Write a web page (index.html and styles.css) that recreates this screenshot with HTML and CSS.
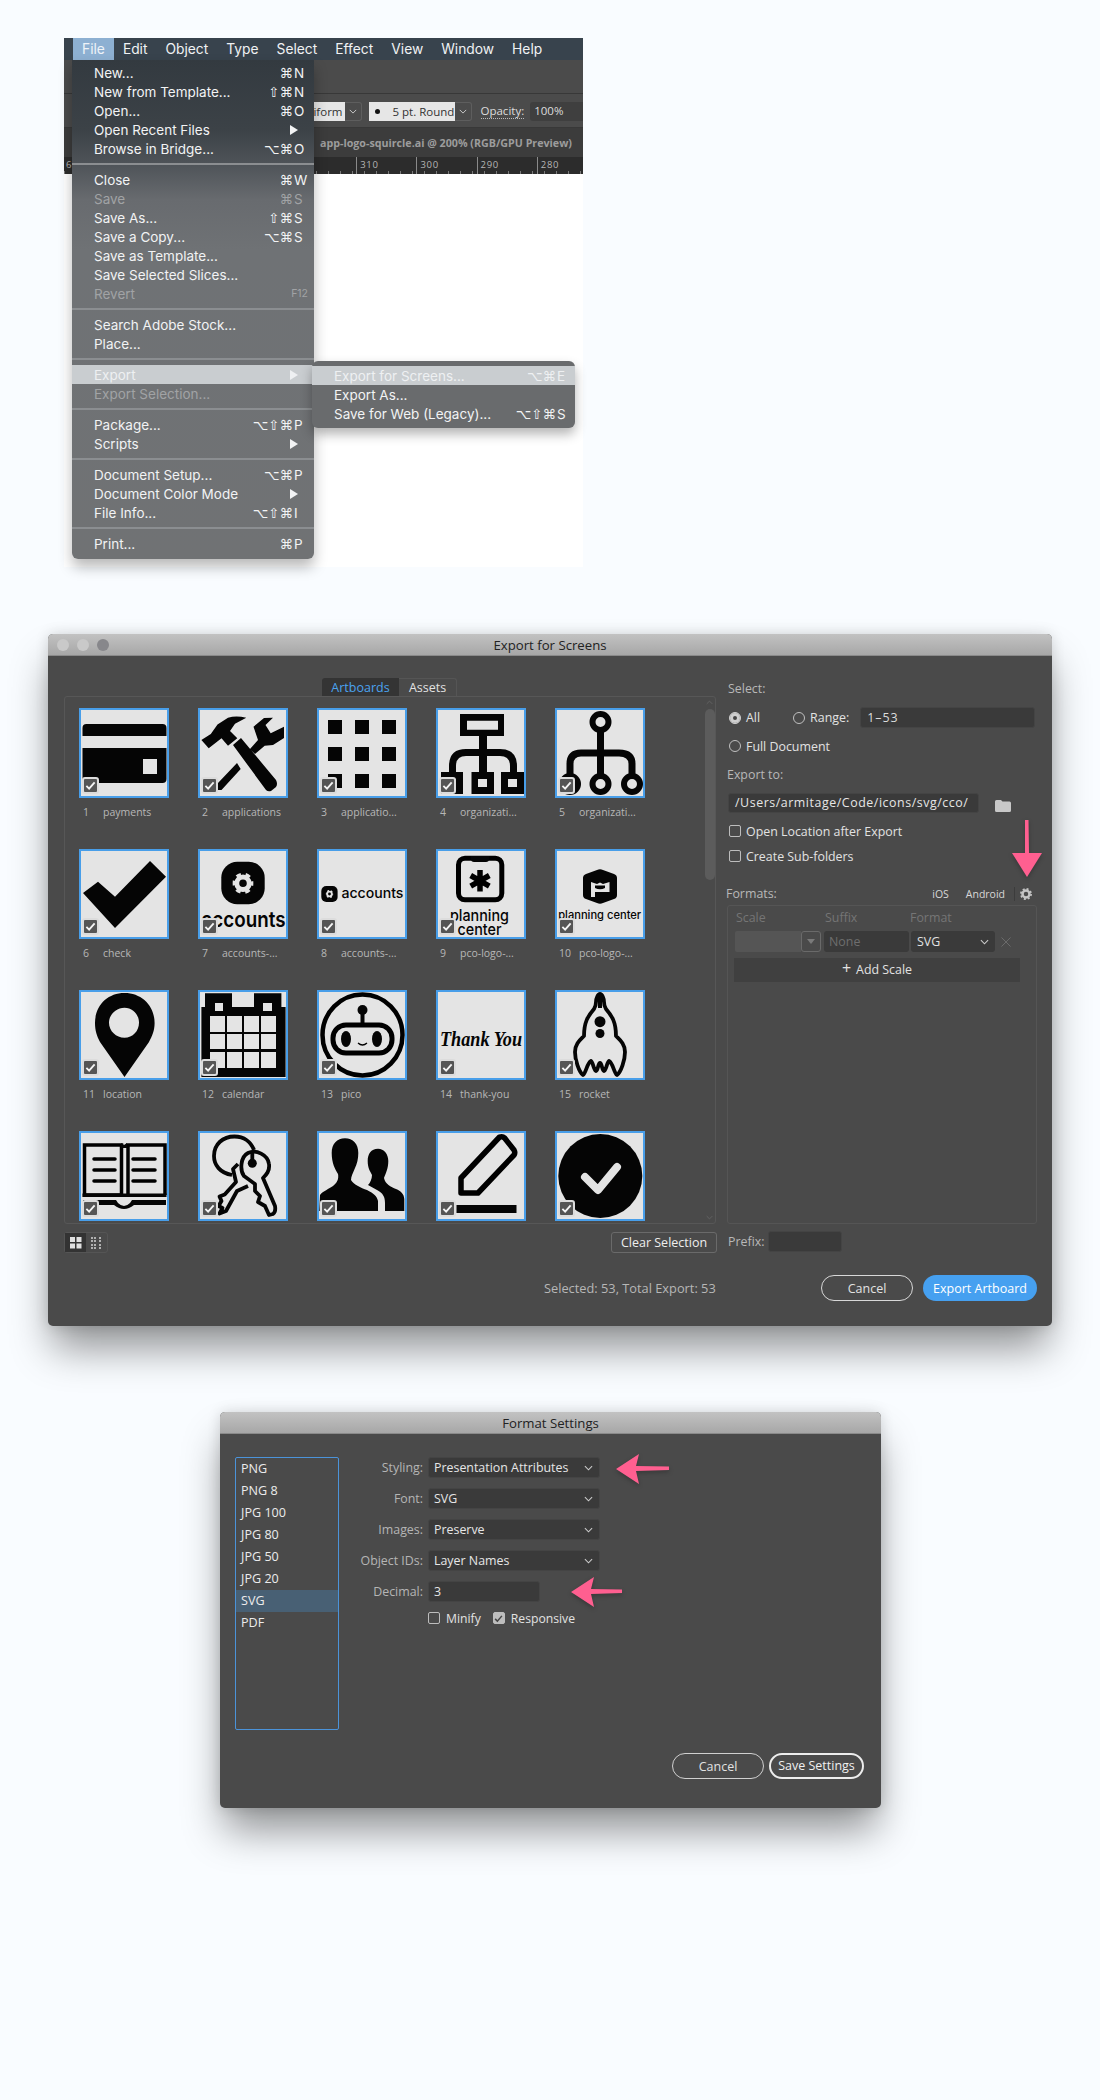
FILE: index.html
```html
<!DOCTYPE html>
<html lang="en">
<head>
<meta charset="utf-8">
<title>Export settings</title>
<link rel="stylesheet" href="styles.css">
</head>
<body>
<svg class="defs" width="0" height="0" aria-hidden="true">
  <symbol id="chev" viewBox="0 0 10 6"><path d="M1 1l4 4 4-4" fill="none" stroke="currentColor" stroke-width="1.2"/></symbol>
  <symbol id="tick" viewBox="0 0 12 12"><path d="M1.500 6.500l3 3 6-7" fill="none" stroke="currentColor" stroke-width="2"/></symbol>
  <symbol id="gear" viewBox="0 0 24 24"><circle cx="12" cy="12" r="7" fill="none" stroke="currentColor" stroke-width="5"/><circle cx="12" cy="12" r="10.2" fill="none" stroke="currentColor" stroke-width="3.4" stroke-dasharray="4 4.01"/></symbol>
  <symbol id="gear6" viewBox="0 0 24 24"><circle cx="12" cy="12" r="7" fill="none" stroke="currentColor" stroke-width="5.500"/><circle cx="12" cy="12" r="10.2" fill="none" stroke="currentColor" stroke-width="3.6" stroke-dasharray="5.34 5.34" stroke-dashoffset="2.670"/></symbol>
</svg>

<section class="app">
  <div class="menubar">
    <span class="mb-item mb-on">File</span><span class="mb-item">Edit</span><span class="mb-item">Object</span><span class="mb-item">Type</span><span class="mb-item">Select</span><span class="mb-item">Effect</span><span class="mb-item">View</span><span class="mb-item">Window</span><span class="mb-item">Help</span>
  </div>
  <div class="ctl-blank"></div>
  <div class="controls">
    <span class="ctl-light ctl-uniform">iform</span><span class="ctl-chev"><svg class="chev"><use href="#chev"/></svg></span>
    <span class="ctl-light ctl-stroke"><i class="dot"></i>5 pt. Round</span><span class="ctl-chev"><svg class="chev"><use href="#chev"/></svg></span>
    <span class="ctl-label">Opacity:</span><span class="ctl-field">100%</span>
  </div>
  <div class="doc-tab"><span class="doc-left"></span><span class="doc-name">app-logo-squircle.ai @ 200% (RGB/GPU Preview)</span></div>
  <div class="ruler"><span class="r-first">6</span><span class="r-cell"></span><span class="r-cell">310</span><span class="r-cell">300</span><span class="r-cell">290</span><span class="r-cell">280</span></div>

  <div class="menu">
    <div class="mi"><span class="ml">New...</span><span class="mods">⌘</span><span class="key">N</span></div>
    <div class="mi"><span class="ml">New from Template...</span><span class="mods">⇧⌘</span><span class="key">N</span></div>
    <div class="mi"><span class="ml">Open...</span><span class="mods">⌘</span><span class="key">O</span></div>
    <div class="mi"><span class="ml">Open Recent Files</span><i class="tri"></i></div>
    <div class="mi"><span class="ml">Browse in Bridge...</span><span class="mods">⌥⌘</span><span class="key">O</span></div>
    <div class="sep"></div>
    <div class="mi"><span class="ml">Close</span><span class="mods">⌘</span><span class="key">W</span></div>
    <div class="mi off"><span class="ml">Save</span><span class="mods">⌘</span><span class="key">S</span></div>
    <div class="mi"><span class="ml">Save As...</span><span class="mods">⇧⌘</span><span class="key">S</span></div>
    <div class="mi"><span class="ml">Save a Copy...</span><span class="mods">⌥⌘</span><span class="key">S</span></div>
    <div class="mi"><span class="ml">Save as Template...</span></div>
    <div class="mi"><span class="ml">Save Selected Slices...</span></div>
    <div class="mi off"><span class="ml">Revert</span><span class="fkey">F12</span></div>
    <div class="sep"></div>
    <div class="mi"><span class="ml">Search Adobe Stock...</span></div>
    <div class="mi"><span class="ml">Place...</span></div>
    <div class="sep"></div>
    <div class="mi hot"><span class="ml">Export</span><i class="tri"></i></div>
    <div class="mi off"><span class="ml">Export Selection...</span></div>
    <div class="sep"></div>
    <div class="mi"><span class="ml">Package...</span><span class="mods">⌥⇧⌘</span><span class="key">P</span></div>
    <div class="mi"><span class="ml">Scripts</span><i class="tri"></i></div>
    <div class="sep"></div>
    <div class="mi"><span class="ml">Document Setup...</span><span class="mods">⌥⌘</span><span class="key">P</span></div>
    <div class="mi"><span class="ml">Document Color Mode</span><i class="tri"></i></div>
    <div class="mi"><span class="ml">File Info...</span><span class="mods">⌥⇧⌘</span><span class="key">I</span></div>
    <div class="sep"></div>
    <div class="mi"><span class="ml">Print...</span><span class="mods">⌘</span><span class="key">P</span></div>
  </div>
  <div class="submenu">
    <div class="mi hot"><span class="ml">Export for Screens...</span><span class="mods">⌥⌘</span><span class="key">E</span></div>
    <div class="mi"><span class="ml">Export As...</span></div>
    <div class="mi"><span class="ml">Save for Web (Legacy)...</span><span class="mods">⌥⇧⌘</span><span class="key">S</span></div>
  </div>
</section>

<section class="dialog export">
  <header class="titlebar">
    <span class="lights"><i class="light"></i><i class="light"></i><i class="light light-on"></i></span>
    <span class="title">Export for Screens</span>
  </header>
  <div class="export-body">
    <div class="ex-left">
      <div class="tabs"><span class="tab tab-on">Artboards</span><span class="tab">Assets</span></div>
      <div class="panel">
        <div class="thumbs">
          <figure class="card">
            <div class="thumb"><svg class="art" viewBox="2 2 86 86"><path d="M3.500 28V20q0-4 4-4h76q4 0 4 4v8zM3.500 40h84v31q0 4-4 4h-76q-4 0-4-4zM64 51v15h14V51z" fill-rule="evenodd"/></svg><span class="ck"><svg><use href="#tick"/></svg></span></div>
            <figcaption class="cap"><b>1</b><span>payments</span></figcaption>
          </figure>
          <figure class="card">
            <div class="thumb"><svg class="art" viewBox="2 2 86 86"><path d="M3.400 32l7.300 8.300 12.800-10 6.500 7.400 9.300-7.400-7.300-7.300 5-7.300 11.300-6c-7-1.500-13-1.500-18.300 0l-10.500 6.700-6.700 9.600zM35 37l8-7 35 42q2 4 0 7l-5 4q-3 1-5-1zM52 41l8-9-4.500-13.300L66 10l9-.3-7.500 7.300 5.200 8.300L86 18.700V30l-11 7-8.300.7L57 46zM39 55l3.700 6-19.200 21H19l1-7z"/></svg><span class="ck"><svg><use href="#tick"/></svg></span></div>
            <figcaption class="cap"><b>2</b><span>applications</span></figcaption>
          </figure>
          <figure class="card">
            <div class="thumb"><svg class="art" viewBox="2 2 86 86"><rect x="11" y="12" width="14" height="14"/><rect x="38" y="12" width="14" height="14"/><rect x="65" y="12" width="14" height="14"/><rect x="11" y="39" width="14" height="14"/><rect x="38" y="39" width="14" height="14"/><rect x="65" y="39" width="14" height="14"/><rect x="11" y="66" width="14" height="14"/><rect x="38" y="66" width="14" height="14"/><rect x="65" y="66" width="14" height="14"/></svg><span class="ck"><svg><use href="#tick"/></svg></span></div>
            <figcaption class="cap"><b>3</b><span>applicatio...</span></figcaption>
          </figure>
          <figure class="card">
            <div class="thumb"><svg class="art" viewBox="2 2 86 86"><path d="M24 6h44v22H51v13h13q17 0 17 17v6h7v22H65V64h9v-6q0-10-10-10H51v16h7v22H35.500V64H43V48H30q-10 0-10 10v6h7v22H5V64h8v-6q0-17 17-17h13V28H24zM31 12.700v9h31v-9zM42 71v8h9v-8zM72 71v8h9v-8zM12 71v8h8v-8z" fill-rule="evenodd"/></svg><span class="ck"><svg><use href="#tick"/></svg></span></div>
            <figcaption class="cap"><b>4</b><span>organizati...</span></figcaption>
          </figure>
          <figure class="card">
            <div class="thumb"><svg class="art art-line" viewBox="2 2 86 86"><circle cx="45.500" cy="14" r="8"/><circle cx="15" cy="76" r="8"/><circle cx="45.500" cy="76" r="8"/><circle cx="77" cy="76" r="8"/><path d="M45.500 22v46M15 68V56q0-11 11-11h38q13 0 13 11v12" stroke-width="7"/></svg><span class="ck"><svg><use href="#tick"/></svg></span></div>
            <figcaption class="cap"><b>5</b><span>organizati...</span></figcaption>
          </figure>

          <figure class="card">
            <div class="thumb"><svg class="art" viewBox="2 2 86 86"><path d="M71 12l16 15.700L36 79 4 44l15-11.300 17 15z"/></svg><span class="ck"><svg><use href="#tick"/></svg></span></div>
            <figcaption class="cap"><b>6</b><span>check</span></figcaption>
          </figure>
          <figure class="card">
            <div class="thumb"><svg class="art" viewBox="2 2 86 86"><rect x="23.300" y="12.700" width="43.400" height="42.600" rx="16"/><svg x="34.300" y="23.600" width="21.400" height="21.400" color="#e4e4e4"><use href="#gear6"/></svg><text class="logo-b" x="45.500" y="78" text-anchor="middle" textLength="84" lengthAdjust="spacingAndGlyphs" font-size="22">accounts</text></svg><span class="ck"><svg><use href="#tick"/></svg></span></div>
            <figcaption class="cap"><b>7</b><span>accounts-...</span></figcaption>
          </figure>
          <figure class="card">
            <div class="thumb"><svg class="art" viewBox="2 2 86 86"><rect x="4.300" y="37" width="16.300" height="16" rx="5"/><svg x="8.500" y="41" width="8" height="8" color="#e4e4e4"><use href="#gear6"/></svg><text class="logo" x="24.400" y="49" textLength="62" lengthAdjust="spacingAndGlyphs" font-size="14">accounts</text></svg><span class="ck"><svg><use href="#tick"/></svg></span></div>
            <figcaption class="cap"><b>8</b><span>accounts-...</span></figcaption>
          </figure>
          <figure class="card">
            <div class="thumb"><svg class="art" viewBox="2 2 86 86"><rect x="22.500" y="9.200" width="43.300" height="41.600" rx="6.500" fill="none" stroke="#000" stroke-width="5"/><path d="M35 7h18v3q0 3-3 3H38q-3 0-3-3z"/><path d="M44 21v21.500M34.700 26.500l18.600 10.700M53.300 26.500L34.700 37.200" stroke="#000" stroke-width="5.500" fill="none"/><text class="logo" x="43.500" y="72" text-anchor="middle" textLength="59" lengthAdjust="spacingAndGlyphs" font-size="16">planning</text><text class="logo" x="43.500" y="85.700" text-anchor="middle" textLength="44" lengthAdjust="spacingAndGlyphs" font-size="16">center</text></svg><span class="ck"><svg><use href="#tick"/></svg></span></div>
            <figcaption class="cap"><b>9</b><span>pco-logo-...</span></figcaption>
          </figure>
          <figure class="card">
            <div class="thumb"><svg class="art" viewBox="2 2 86 86"><path d="M42 21q3-1.500 6 0l11 4q3 1 3 4v17q0 3-3 4l-11 4q-3 1.500-6 0l-11-4q-3-1-3-4V29q0-3 3-4z"/><path d="M36 33l6 2 3-1.500L48 35l6.500-2v10H40v5h-4z" fill="#e4e4e4"/><path d="M40 36.500h10V39q-5 2.500-10 0z"/><text class="logo" x="44.700" y="70" text-anchor="middle" textLength="83" lengthAdjust="spacingAndGlyphs" font-size="11.500">planning center</text></svg><span class="ck"><svg><use href="#tick"/></svg></span></div>
            <figcaption class="cap"><b>10</b><span>pco-logo-...</span></figcaption>
          </figure>

          <figure class="card">
            <div class="thumb"><svg class="art" viewBox="2 2 86 86"><path d="M45.500 3C28 3 16 16 16 33c0 8 2 13 5 19l24.500 35L70 52c3-6 5.600-11 5.600-19C75.600 16 63 3 45.500 3zm0 14.700c8.300 0 14.500 6.700 14.500 15s-6.200 15-14.500 15S30 41 30 32.700s7.200-15 15.500-15z" fill-rule="evenodd"/></svg><span class="ck"><svg><use href="#tick"/></svg></span></div>
            <figcaption class="cap"><b>11</b><span>location</span></figcaption>
          </figure>
          <figure class="card">
            <div class="thumb"><svg class="art" viewBox="2 2 86 86"><path d="M7 3.300h27V17h22V3.300h27.400V17h4.200v70H3.400V17H7zM17 13v8h8v-8zM65 13v8h9v-8zM12 26v16h15V26zM29 26v16h15V26zM46 26v16h15V26zM63 26v16h15V26zM12 44v15h15V44zM29 44v15h15V44zM46 44v15h15V44zM63 44v15h15V44zM12 62v16h15V62zM29 62v16h15V62zM46 62v16h15V62zM63 62v16h15V62z" fill-rule="evenodd"/></svg><span class="ck"><svg><use href="#tick"/></svg></span></div>
            <figcaption class="cap"><b>12</b><span>calendar</span></figcaption>
          </figure>
          <figure class="card">
            <div class="thumb"><svg class="art" viewBox="2 2 86 86"><ellipse cx="45.500" cy="45" rx="40" ry="40.500" fill="none" stroke="#000" stroke-width="4.500"/><circle cx="45.500" cy="20" r="5"/><rect x="43.500" y="22" width="4" height="12"/><rect x="16" y="35" width="59" height="28" rx="13" fill="none" stroke="#000" stroke-width="5"/><ellipse cx="29" cy="49" rx="5" ry="8"/><ellipse cx="60" cy="49" rx="5" ry="8"/><path d="M41 53q4.500 4 9 0" fill="none" stroke="#000" stroke-width="1.200"/></svg><span class="ck"><svg><use href="#tick"/></svg></span></div>
            <figcaption class="cap"><b>13</b><span>pico</span></figcaption>
          </figure>
          <figure class="card">
            <div class="thumb"><svg class="art" viewBox="2 2 86 86"><text class="thanks" x="4" y="56" textLength="82" lengthAdjust="spacingAndGlyphs" font-size="21">Thank You</text></svg><span class="ck"><svg><use href="#tick"/></svg></span></div>
            <figcaption class="cap"><b>14</b><span>thank-you</span></figcaption>
          </figure>
          <figure class="card">
            <div class="thumb"><svg class="art art-line art-thin" viewBox="2 2 86 86"><path d="M45 4C43 4 41 8 41 12C41 14 41 16 39 19C33 26 29 32 29 46C25 50 20 54 20 62C20 70 24 82 28 85C31 83 32 73 36 71C38 72 39 81 41 81C43 81 43 73 45 73C47 73 47 81 49 81C51 81 52 72 54 71C58 73 59 83 62 85C66 82 70 70 70 62C70 54 65 50 61 46C61 32 57 26 51 19C49 16 49 14 49 12C49 8 47 4 45 4Z"/><path d="M45 5v13" stroke-width="4"/><circle cx="45" cy="31.700" r="5.500" class="solid"/><circle cx="45" cy="43.500" r="4.500" class="solid"/></svg><span class="ck"><svg><use href="#tick"/></svg></span></div>
            <figcaption class="cap"><b>15</b><span>rocket</span></figcaption>
          </figure>

          <figure class="card">
            <div class="thumb"><svg class="art" viewBox="2 2 86 86"><path d="M5.500 64V14h37v50zM49 64V14h37v50" fill="none" stroke="#000" stroke-width="3.500"/><path d="M42 12l3 2 3-2v5h-6z"/><path d="M15 28h21M15 39h21M15 50h21M54 28h22M54 39h22M54 50h22" stroke="#000" stroke-width="3.500" stroke-linecap="round"/><path d="M4 69h33l2 3q6 6 12 0l2-3h34v5H55q-10 8-20 0H4zM3.500 62.500h84V66h-84z"/></svg><span class="ck"><svg><use href="#tick"/></svg></span></div>
          </figure>
          <figure class="card">
            <div class="thumb"><svg class="art art-line art-thin" viewBox="2 2 86 86"><path d="M34 44C22 42 16 34 16 25C16 13 25 5.500 36.500 5.500C46 5.500 53 11 56 19"/><path d="M46 45C42 40 42 26 50 22C58 18 70 24 71 33C72 40 68 44 65 47L77 75Q78 81 75 83L71 84L67 75L60 71L62 65L57 60L57 53Z"/><path d="M54.300 21v11"/><circle cx="54.300" cy="32.300" r="4.500" class="solid"/><path d="M40 33L35 38L38 51L26.700 63.500L21.500 65.500L23.500 70L20.500 75L24.500 77L21.500 82.500L28 80L39 60L50 55"/></svg><span class="ck"><svg><use href="#tick"/></svg></span></div>
          </figure>
          <figure class="card">
            <div class="thumb"><svg class="art" viewBox="2 2 86 86"><path d="M28 7.300C20 7.300 14.700 13 14.700 22C14.700 32 18 38 21 43C22 48 20 52 16 55C12 58 6 60 3 64L2.300 80H61V70C60 65 56 62 50 59C44 57 36 53 34 49C34 45 36 42 38 37C40 33 41.300 28 41.300 22C41.300 13 36 7.300 28 7.300Z"/><path d="M61 17.700C54 17.700 50.700 23 50.700 30C50.700 37 53 40 55 44C55 48 53 52 51 54L60 59C66 62 68 66 68 72V80H87.300V68C87 63 84 60 79 58C74 56 68 53 67 47C69 42 71.300 37 71.300 30C71.300 23 67 17.700 61 17.700Z"/></svg><span class="ck"><svg><use href="#tick"/></svg></span></div>
          </figure>
          <figure class="card">
            <div class="thumb"><svg class="art" viewBox="2 2 86 86"><path d="M25 47L63.600 6q3-1 5 1L78 19q1.500 3 0 5L42 62H25z" fill="none" stroke="#000" stroke-width="5.500" stroke-linejoin="round"/><rect x="20.500" y="74" width="60" height="8"/></svg><span class="ck"><svg><use href="#tick"/></svg></span></div>
          </figure>
          <figure class="card">
            <div class="thumb"><svg class="art" viewBox="2 2 86 86"><circle cx="45.300" cy="45" r="42"/><path d="M30 46l13 13 19-23" fill="none" stroke="#e4e4e4" stroke-width="8" stroke-linecap="round" stroke-linejoin="round"/></svg><span class="ck"><svg><use href="#tick"/></svg></span></div>
          </figure>
        </div>
        <div class="scroll"><svg class="scroll-up"><use href="#chev"/></svg><i class="scroll-thumb"></i><svg class="scroll-down"><use href="#chev"/></svg></div>
      </div>
      <div class="tool-row">
        <span class="view-toggle"><span class="vt vt-on"><svg viewBox="0 0 12 12"><path d="M0 0h5v5H0zM6.500 0h5v5h-5zM0 6.500h5v5H0zM6.500 6.500h5v5h-5z"/></svg></span><span class="vt"><svg viewBox="0 0 12 12"><path d="M0 0h2v2H0zM3 0h2v2H3zM8 0h2v2H8zM0 3h2v2H0zM3 3h2v2H3zM8 3h2v2H8zM0 7h2v2H0zM3 7h2v2H3zM8 7h2v2H8zM0 10h2v2H0zM3 10h2v2H3zM8 10h2v2H8z"/></svg></span></span>
        <span class="btn-clear">Clear Selection</span>
      </div>
    </div>

    <div class="ex-right">
      <div class="lb r-select">Select:</div>
      <div class="r-radio">
        <i class="radio radio-on"></i><span class="opt">All</span>
        <i class="radio r-range"></i><span class="opt">Range:</span>
        <span class="field field-range">1–53</span>
      </div>
      <div class="r-full"><i class="radio"></i><span class="opt">Full Document</span></div>
      <div class="lb r-exportto">Export to:</div>
      <div class="r-path"><span class="field field-path">/Users/armitage/Code/icons/svg/cco/</span>
        <svg class="folder" viewBox="0 0 16 12"><path d="M0 1.500Q0 0 1.500 0H6l1.500 1.500h7Q16 1.500 16 3v7.500Q16 12 14.500 12h-13Q0 12 0 10.500z"/></svg>
      </div>
      <div class="r-check r-check1"><i class="cb"></i><span class="opt">Open Location after Export</span></div>
      <div class="r-check r-check2"><i class="cb"></i><span class="opt">Create Sub-folders</span></div>
      <div class="r-formats">
        <span class="lb">Formats:</span>
        <span class="fm-ios">iOS</span><span class="fm-android">Android</span><i class="fm-sep"></i>
        <svg class="fm-gear"><use href="#gear"/></svg>
      </div>
      <div class="fm-box">
        <div class="fm-head"><span class="h-scale">Scale</span><span class="h-suffix">Suffix</span><span>Format</span></div>
        <div class="fm-row">
          <span class="fm-scale"></span><span class="fm-drop"><i class="tri-down"></i></span>
          <span class="fm-none">None</span>
          <span class="fm-svg">SVG<svg class="chev"><use href="#chev"/></svg></span>
          <svg class="fm-x" viewBox="0 0 11 11"><path d="M.5.500l10 10M10.500.500l-10 10"/></svg>
        </div>
        <div class="fm-add"><span class="plus">+</span>Add Scale</div>
      </div>
      <div class="r-prefix"><span class="lb">Prefix:</span><span class="field field-prefix"></span></div>
      <svg class="pink arrow-down" viewBox="0 0 30 57"><path d="M13 0h3.500L17 33h13L15 57 0 33h13z"/></svg>
    </div>
  </div>
  <footer class="ex-foot">
    <span class="status">Selected: 53, Total Export: 53</span>
    <span class="pill pill-cancel">Cancel</span>
    <span class="pill pill-blue">Export Artboard</span>
  </footer>
</section>

<section class="dialog format">
  <header class="titlebar"><span class="title">Format Settings</span></header>
  <div class="format-body">
    <ul class="fmt-list">
      <li>PNG</li><li>PNG 8</li><li>JPG 100</li><li>JPG 80</li><li>JPG 50</li><li>JPG 20</li><li class="fmt-on">SVG</li><li>PDF</li>
    </ul>
    <div class="fmt-form">
      <div class="fr"><span class="fl">Styling:</span><span class="sel">Presentation Attributes<svg class="chev"><use href="#chev"/></svg></span></div>
      <div class="fr"><span class="fl">Font:</span><span class="sel">SVG<svg class="chev"><use href="#chev"/></svg></span></div>
      <div class="fr"><span class="fl">Images:</span><span class="sel">Preserve<svg class="chev"><use href="#chev"/></svg></span></div>
      <div class="fr"><span class="fl">Object IDs:</span><span class="sel">Layer Names<svg class="chev"><use href="#chev"/></svg></span></div>
      <div class="fr"><span class="fl">Decimal:</span><span class="sel sel-short">3</span></div>
      <div class="fr-checks"><i class="cb"></i><span class="opt">Minify</span><i class="cb cb-on"><svg><use href="#tick"/></svg></i><span class="opt">Responsive</span></div>
    </div>
    <svg class="pink arrow-1" viewBox="0 0 53 30"><path d="M0 15L23 0l-3 12 33 .5v3.500L20 17l3 13z"/></svg>
    <svg class="pink arrow-2" viewBox="0 0 51 30"><path d="M0 15L23 0l-3 12 31 .5v3.500L20 17l3 13z"/></svg>
  </div>
  <footer class="fmt-foot"><span class="pill pill-c2">Cancel</span><span class="pill pill-save">Save Settings</span></footer>
</section>
</body>
</html>
```
FILE: styles.css
```css
* { box-sizing: border-box; }
html, body { margin: 0; padding: 0; }
body {
  width: 1100px;
  height: 2100px;
  overflow: hidden;
  background: #f9fcff;
  font-family: "Inter", "DejaVu Sans", sans-serif;
  padding-top: 38px;
}
.defs { position: absolute; }
i { font-style: normal; }

/* ---------- Illustrator window with File menu ---------- */
.app {
  position: relative;
  width: 519px;
  height: 529px;
  margin-left: 64px;
  background: #fff;
  color: #eee;
}
.menubar {
  display: flex;
  height: 22px;
  padding-left: 9px;
  background: #38434d;
  font-size: 13.800px;
  line-height: 22px;
  color: #f0f2f4;
}
.mb-item { padding: 0 9px; }
.mb-on { background: #8db0d2; color: #eef3f8; }
.ctl-blank { height: 34px; background: #4b4b4b; border-bottom: 1px solid #383838; }
.controls {
  display: flex;
  align-items: flex-start;
  height: 34px;
  padding: 8px 0 0 236px;
  background: #4b4b4b;
  border-bottom: 1px solid #383838;
  font-family: "Open Sans", "DejaVu Sans", sans-serif;
  font-size: 11.500px;
}
.ctl-light {
  display: flex;
  align-items: center;
  height: 19px;
  background: #e6e6e6;
  color: #333;
}
.ctl-uniform { width: 44.500px; justify-content: flex-end; padding-right: 2px; }
.ctl-chev {
  display: flex;
  align-items: center;
  justify-content: center;
  width: 17px;
  height: 19px;
  border: 1px solid #5e5e5e;
  border-left: 0;
  border-radius: 0 3px 3px 0;
  color: #ccc;
}
.ctl-chev .chev { width: 8px; height: 5px; }
.ctl-chev:nth-of-type(2) { margin-right: 7px; }
.ctl-stroke { width: 86px; padding-left: 6px; white-space: nowrap; }
.dot { width: 5px; height: 5px; margin-right: 13px; border-radius: 50%; background: #111; flex: none; }
.ctl-label { margin: 2px 0 0 9px; color: #ddd; border-bottom: 1px dotted #bbb; line-height: 14px; }
.ctl-field {
  flex: 1;
  height: 19px;
  margin-left: 6px;
  padding-left: 4px;
  background: #3f3f3f;
  border-radius: 3px 0 0 3px;
  line-height: 18px;
  color: #ddd;
}
.doc-tab {
  display: flex;
  align-items: center;
  height: 29px;
  background: #3c3c3c;
  font-family: "Open Sans", "DejaVu Sans", sans-serif;
  font-size: 10.700px;
  font-weight: 700;
  color: #9c9c9c;
  white-space: nowrap;
}
.doc-left { flex: none; width: 256px; }
.ruler {
  display: flex;
  height: 17px;
  overflow: hidden;
  background-color: #2c2c2c;
  background-image: repeating-linear-gradient(90deg, #7a7a7a 0 1px, transparent 1px 12px);
  background-size: 100% 3px;
  background-position: 0 100%;
  background-repeat: no-repeat;
  font-family: "Open Sans", "DejaVu Sans", sans-serif;
  font-size: 9.500px;
  letter-spacing: .7px;
  line-height: 15px;
  color: #b5b5b5;
}
.r-first { flex: none; width: 232px; padding-left: 2px; }
.r-cell { flex: none; width: 60.200px; padding-left: 3px; border-left: 1px solid #8a8a8a; }

.menu, .submenu {
  position: absolute;
  font-size: 13.500px;
  color: #f2f3f4;
}
.menu {
  left: 8px;
  top: 22px;
  width: 242px;
  height: 499px;
  padding: 3px 0 5px;
  border-radius: 0 0 6px 6px;
  background: linear-gradient(180deg, #333a40 0, #3c4247 70px, #4f5459 105px, #686b6f 140px, #6f7275 190px, #707274 100%);
  box-shadow: 0 8px 14px rgba(0, 0, 0, .28);
}
.submenu {
  left: 248px;
  top: 323px;
  width: 263px;
  height: 67px;
  padding-top: 5px;
  border-radius: 6px;
  background: #696b6d;
  box-shadow: 0 6px 12px rgba(0, 0, 0, .3);
}
.mi {
  display: flex;
  align-items: center;
  height: 19px;
  padding-left: 22px;
  white-space: nowrap;
}
.ml { flex: 1; }
.mods { font-family: "DejaVu Sans", sans-serif; font-size: 13.500px; letter-spacing: 0; }
.key { width: 21px; padding-left: 1px; }
.fkey { padding-right: 6px; font-size: 10.500px; }
.tri {
  width: 0;
  height: 0;
  margin-right: 16px;
  border-left: 8px solid #f2f3f4;
  border-top: 5px solid transparent;
  border-bottom: 5px solid transparent;
}
.off { color: #a1a3a5; }
.hot { background: #c9cdd0; color: #eef0f2; }
.hot .tri { border-left-color: #eef0f2; }
.sep { height: 2px; margin: 5px 0; background: #8b8e91; }
.submenu .key { width: 19px; }

/* ---------- Dialogs ---------- */
.dialog {
  position: relative;
  background: #4a4a4a;
  border-radius: 5px;
  font-family: "Open Sans", "DejaVu Sans", sans-serif;
  color: #e2e2e2;
  box-shadow: 0 26px 40px -4px rgba(0, 0, 0, .42), 0 0 14px rgba(0, 0, 0, .14);
}
.export { width: 1004px; height: 692px; margin: 67px 0 0 48px; }
.format { width: 661px; height: 396px; margin: 86px 0 0 220px; }
.titlebar {
  position: relative;
  display: flex;
  align-items: center;
  justify-content: center;
  height: 22px;
  padding-top: 1px;
  border-radius: 5px 5px 0 0;
  background: linear-gradient(180deg, #c2c2c2, #a7a7a7);
  border-bottom: 1px solid #8a8a8a;
}
.title { font-size: 13.200px; color: #222; }
.lights { position: absolute; left: 9px; top: 5px; display: flex; gap: 8px; }
.light { width: 12px; height: 12px; border-radius: 50%; background: #c9c9c9; }
.light-on { background: #87878b; }

.export-body {
  display: grid;
  grid-template-columns: 652px 310px;
  column-gap: 11px;
  padding: 22px 0 0 16px;
}
.tabs { display: flex; height: 18px; margin-left: 258px; font-size: 12.500px; line-height: 18px; text-align: center; }
.tab {
  width: 58px;
  border: 1px solid #555;
  border-bottom: 0;
  border-left: 0;
  border-radius: 0 3px 0 0;
  line-height: 18px;
}
.tab-on { width: 77px; background: #343434; color: #4ba3f0; border: 0; border-radius: 3px 0 0 0; line-height: 19px; }
.panel {
  display: flex;
  height: 528px;
  overflow: hidden;
  border: 1px solid #575757;
  border-radius: 3px;
}
.thumbs {
  display: grid;
  grid-template-columns: repeat(5, 90px);
  grid-auto-rows: 141px;
  column-gap: 29px;
  padding: 11px 0 0 14px;
}
.card { margin: 0; }
.thumb {
  position: relative;
  width: 90px;
  height: 90px;
  background: #e4e4e4;
  border: 2px solid #489ee9;
}
.art { display: block; width: 86px; height: 86px; fill: #050505; }
.art-line { fill: none; stroke: #050505; stroke-width: 6; }
.art-thin { stroke-width: 3.800; stroke-linejoin: round; }
.solid { fill: #050505; stroke: none; }
.logo, .logo-b, .thanks { stroke: none; fill: #050505; }
.logo { font-family: "Inter", sans-serif; font-weight: 500; }
.logo-b { font-family: "Inter", sans-serif; font-weight: 600; }
.thanks { font-family: "Liberation Serif", serif; font-style: italic; font-weight: 700; }
.ck {
  position: absolute;
  left: 1px;
  top: 67px;
  display: flex;
  align-items: center;
  justify-content: center;
  width: 17px;
  height: 17px;
  background: #555;
  border: 2px solid #dcdcdc;
  border-radius: 3px;
  color: #f4f4f4;
}
.ck svg { width: 11px; height: 11px; }
.cap {
  display: flex;
  height: 16px;
  margin-top: 6px;
  padding-left: 4px;
  font-size: 10.500px;
  line-height: 16px;
  color: #b7b7b7;
}
.cap b { width: 20px; font-weight: 400; }

.scroll {
  display: flex;
  flex-direction: column;
  align-items: center;
  width: 11px;
  margin-left: auto;
  color: #666;
}
.scroll-up { width: 7px; height: 5px; margin-top: 3px; transform: rotate(180deg); }
.scroll-thumb { width: 10px; height: 171px; margin-top: 4px; background: #5c5c5c; border-radius: 5px; }
.scroll-down { width: 7px; height: 5px; margin-top: auto; margin-bottom: 3px; }

.tool-row { display: flex; align-items: center; justify-content: space-between; height: 21px; margin-top: 8px; }
.view-toggle { display: flex; height: 21px; border: 1px solid #555; border-radius: 3px; }
.vt { display: flex; align-items: center; justify-content: center; width: 21px; fill: #b0b0b0; }
.vt-on { background: #333; fill: #e0e0e0; }
.vt svg { width: 12px; height: 12px; }
.btn-clear {
  width: 106px;
  height: 21px;
  margin-right: -1px;
  border: 1px solid #6a6a6a;
  border-radius: 3px;
  font-size: 12.500px;
  line-height: 20px;
  text-align: center;
  color: #eee;
}

.ex-right { position: relative; font-size: 12.400px; }
.lb { font-size: 12.400px; line-height: 20px; color: #b8b8b8; }
.opt { font-size: 12.400px; color: #e2e2e2; white-space: nowrap; }
.r-select { margin: 1px 0 0 1px; }
.r-radio { display: flex; align-items: center; height: 21px; margin-top: 8px; padding-left: 2px; }
.radio { width: 12px; height: 12px; flex: none; margin-right: 5px; border: 1px solid #c0c0c0; border-radius: 50%; }
.radio-on { background: #cfcfcf; box-shadow: inset 0 0 0 3px #cfcfcf, inset 0 0 0 6px #444; border-color: #cfcfcf; }
.r-range { margin-left: 33px; }
.field { display: block; background: #3a3a3a; border: 1px solid #444; border-radius: 3px; }
.field-range { width: 175px; height: 21px; margin-left: 11px; padding-left: 6px; line-height: 19px; letter-spacing: 1px; color: #ddd; }
.r-full { display: flex; align-items: center; height: 20px; margin-top: 8px; padding-left: 2px; }
.r-exportto { height: 20px; margin-top: 9px; }
.r-path { display: flex; align-items: center; height: 20px; margin-top: 8px; padding-left: 1px; }
.field-path { width: 251px; height: 20px; padding-left: 6px; line-height: 18px; letter-spacing: .55px; white-space: nowrap; color: #e6e6e6; }
.folder { width: 16px; height: 12px; margin: 6px 0 0 16px; fill: #c8c8c8; }
.r-check { display: flex; align-items: center; height: 20px; padding-left: 2px; }
.r-check1 { margin-top: 8px; }
.r-check2 { margin-top: 5px; }
.cb { display: inline-block; width: 12px; height: 12px; flex: none; margin-right: 5px; border: 1px solid #bdbdbd; border-radius: 2px; }
.r-formats { display: flex; align-items: center; height: 20px; margin-top: 18px; padding-right: 5px; }
.r-formats .lb { margin-left: -1px; }
.fm-ios { margin-left: auto; font-size: 10.500px; color: #d8d8d8; flex: none; }
.fm-android { margin-left: 17px; font-size: 10.500px; color: #d8d8d8; flex: none; }
.fm-sep { flex: none; width: 1px; height: 14px; margin-left: 9px; background: #3c3c3c; }
.fm-gear { flex: none; width: 12px; height: 12px; margin-left: 5px; color: #c4c4c4; }
.fm-box { height: 319px; margin-top: 1px; border: 1px solid #555; border-radius: 3px; padding: 3px 0 0 7px; }
.fm-head { display: flex; height: 18px; font-size: 12.400px; line-height: 18px; color: #757575; }
.fm-head span { white-space: nowrap; }
.h-scale { width: 89px; margin-left: 1px; }
.h-suffix { width: 85px; }
.fm-row { display: flex; align-items: center; height: 21px; margin-top: 4px; }
.fm-scale { width: 66px; height: 21px; background: #555; border-radius: 2px 0 0 2px; }
.fm-drop { display: flex; align-items: center; justify-content: center; width: 20px; height: 21px; border: 1px solid #6a6a6a; border-radius: 3px; }
.tri-down { width: 0; height: 0; border-top: 5px solid #7a7a7a; border-left: 4px solid transparent; border-right: 4px solid transparent; }
.fm-none { width: 85px; height: 21px; margin-left: 3px; padding-left: 5px; background: #3a3a3a; border-radius: 3px; line-height: 21px; color: #6e6e6e; }
.fm-svg { display: flex; align-items: center; justify-content: space-between; width: 84px; height: 21px; margin-left: 2px; padding: 0 6px; background: #3a3a3a; border-radius: 3px; color: #e2e2e2; }
.chev { display: block; width: 9px; height: 6px; color: #ccc; }
.fm-x { width: 10px; height: 10px; margin-left: 6px; fill: none; stroke: #6e6e6e; stroke-width: 1; }
.fm-add { height: 24px; width: 286px; margin: 6px 0 0 -1px; background: #404040; line-height: 24px; text-align: center; color: #e2e2e2; }
.plus { margin-right: 5px; font-size: 16px; line-height: 16px; }
.r-prefix { display: flex; align-items: center; height: 21px; margin-top: 7px; }
.r-prefix .lb { width: 41px; padding-left: 1px; line-height: 22px; }
.field-prefix { width: 74px; height: 21px; }
.pink { position: absolute; fill: #ff5f90; filter: drop-shadow(0 2px 2px rgba(0, 0, 0, .25)); }
.arrow-down { left: 285px; top: 142px; width: 30px; height: 57px; }

.ex-foot { display: flex; align-items: center; height: 26px; margin-top: 22px; padding-left: 496px; }
.status { width: 173px; margin-right: 104px; font-size: 12.800px; white-space: nowrap; color: #b7b7b7; }
.pill {
  display: block;
  height: 26px;
  border-radius: 13px;
  font-size: 12.500px;
  line-height: 25px;
  text-align: center;
  white-space: nowrap;
}
.pill-cancel { width: 92px; margin-right: 10px; border: 1px solid #d8d8d8; }
.pill-blue { width: 114px; background: #46a0f0; color: #fff; line-height: 27px; }

.format-body { position: relative; display: flex; height: 330px; padding: 23px 0 0 15px; }
.fmt-list {
  width: 104px;
  height: 273px;
  margin: 0;
  padding: 0;
  list-style: none;
  border: 1px solid #4b93d9;
  border-radius: 2px;
  font-size: 12.600px;
}
.fmt-list li { height: 22px; padding-left: 5px; line-height: 22px; color: #ececec; }
.fmt-list .fmt-on { background: #486074; }
.fmt-form { margin-left: 5px; }
.fr { display: flex; align-items: center; height: 21px; margin-bottom: 10px; }
.fl { width: 79px; margin-right: 5px; font-size: 12.400px; text-align: right; white-space: nowrap; color: #b5b5b5; }
.sel {
  display: flex;
  align-items: center;
  justify-content: space-between;
  width: 172px;
  height: 21px;
  padding: 0 6px 0 5px;
  background: #3a3a3a;
  border: 1px solid #444;
  border-radius: 3px;
  font-size: 12.400px;
  color: #e6e6e6;
}
.sel-short { width: 112px; }
.fr-checks { display: flex; align-items: center; height: 18px; margin: -3px 0 0 84px; }
.fr-checks .cb { margin-right: 6px; }
.fr-checks .opt { margin-right: 12px; font-size: 12.200px; }
.cb-on { display: flex; align-items: center; justify-content: center; background: #bdbdbd; color: #444; }
.cb-on svg { width: 9px; height: 9px; }
.arrow-1 { left: 396px; top: 20px; width: 53px; height: 30px; }
.arrow-2 { left: 351px; top: 143px; width: 51px; height: 30px; }
.fmt-foot { display: flex; justify-content: flex-end; gap: 5px; margin-top: -11px; padding-right: 17px; }
.pill-c2 { width: 92px; border: 1px solid #d0d0d0; }
.pill-save { width: 95px; border: 2px solid #ececec; line-height: 22px; color: #f0f0f0; }
```
